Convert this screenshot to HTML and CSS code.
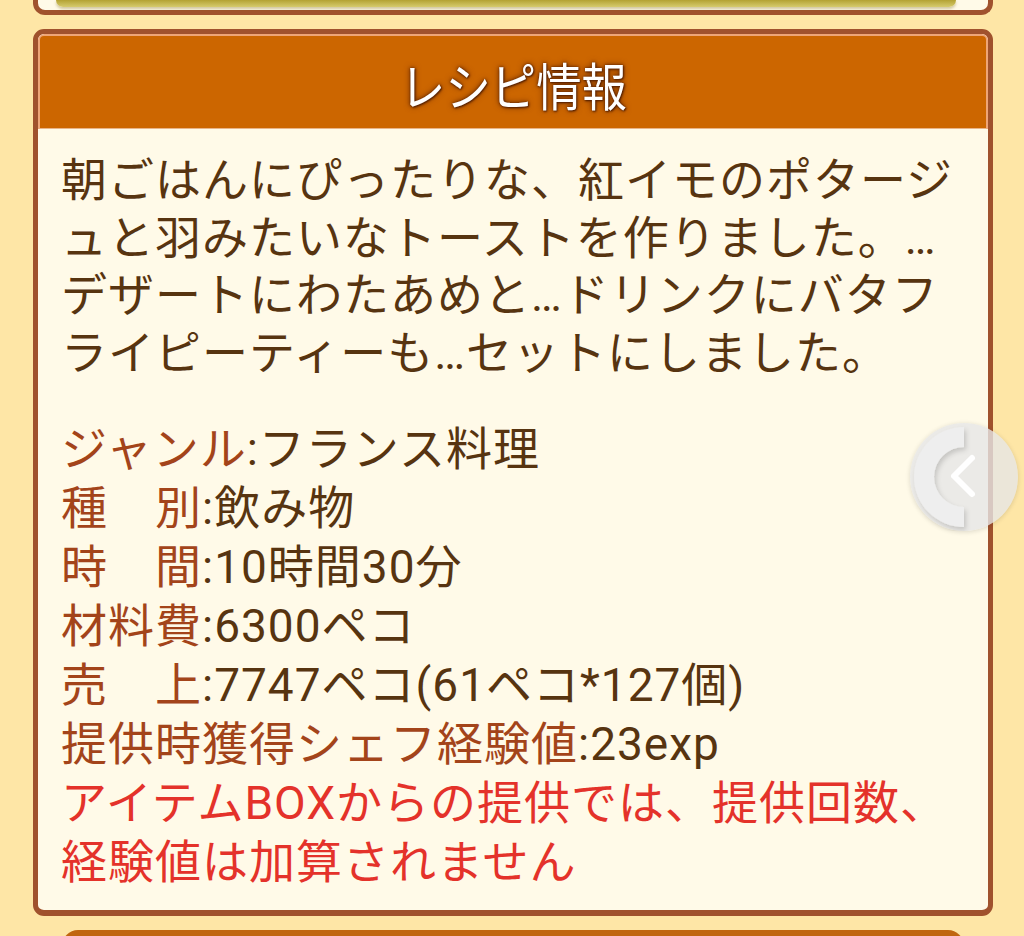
FILE: index.html
```html
<!DOCTYPE html>
<html lang="ja">
<head>
<meta charset="utf-8">
<title>レシピ情報</title>
<link rel="stylesheet" href="styles.css">
</head>
<body>
<div class="prev-card"><div class="prev-bar"></div></div>

<section class="card">
  <header class="card-head"><h2 class="card-title">レシピ情報</h2></header>
  <div class="card-body">
    <p class="desc">朝ごはんにぴったりな、紅イモのポタージ<br>ュと羽みたいなトーストを作りました。…<br>デザートにわたあめと…ドリンクにバタフ<br>ライピーティーも…セットにしました。</p>
    <ul class="info">
      <li><span class="label">ジャンル</span>:フランス料理</li>
      <li><span class="label">種　別</span>:飲み物</li>
      <li><span class="label">時　間</span>:10時間30分</li>
      <li><span class="label">材料費</span>:6300ペコ</li>
      <li><span class="label">売　上</span>:7747ペコ(61ペコ*127個)</li>
      <li><span class="label">提供時獲得シェフ経験値</span>:23exp</li>
      <li class="warn">アイテムBOXからの提供では、提供回数、<br>経験値は加算されません</li>
    </ul>
  </div>
</section>

<div class="next-card"></div>

<button class="side-btn" aria-label="戻る">
  <svg viewBox="0 0 108 108" width="108" height="108">
    <defs>
      <filter id="sh" x="-30%" y="-30%" width="160%" height="160%">
        <feDropShadow dx="2" dy="3" stdDeviation="2.5" flood-color="#000" flood-opacity="0.16"/>
      </filter>
    </defs>
    <path d="M54,4 A50,50 0 0 0 54,104 L54,84 A30,30 0 0 1 54,24 Z" fill="#eeeeee" filter="url(#sh)"/>
    <path d="M62,35 L44,53 L62,71" fill="none" stroke="#ffffff" stroke-width="6" stroke-linecap="round" stroke-linejoin="round"/>
  </svg>
</button>
</body>
</html>
```

FILE: styles.css
```css
html, body {
  margin: 0;
  padding: 0;
}
body {
  background: #fee6a6;
  width: 1024px;
  height: 936px;
  overflow: hidden;
  position: relative;
  font-family: Roboto, "Noto Sans CJK JP", sans-serif;
}

.prev-card {
  margin: 0 31px 0 33px;
  height: 10px;
  border: 5px solid #a0522d;
  border-top: none;
  border-radius: 0 0 12px 12px;
  background: #fffae8;
  display: flex;
  justify-content: center;
}
.prev-bar {
  width: 900px;
  height: 7px;
  margin-left: -14px;
  background: linear-gradient(#b3a233, #d6cb6e);
  border-radius: 0 0 14px 14px;
  box-shadow: 0 2px 3px rgba(120, 100, 20, 0.35);
}

.card {
  margin: 14px 31px 0 33px;
  border: 5px solid #a0522d;
  border-bottom-width: 6px;
  border-radius: 11px;
  background: #fffae8;
  overflow: hidden;
}
.card-head {
  background: #cc6600;
  border: 2px solid #eea577;
  border-bottom: 1px solid #e9b488;
  border-radius: 6px 6px 0 0;
  box-sizing: border-box;
  height: 95px;
  display: flex;
  align-items: center;
  justify-content: center;
}
.card-title {
  margin: 4px 0 0 2px;
  font-family: "Noto Sans CJK JP", sans-serif;
  font-weight: 400;
  font-size: 51px;
  line-height: 1;
  color: #ffffff;
  transform: scaleX(0.89);
  text-shadow: 0 0 3px #5a2200, 0 0 7px #6e2d00, 1px 1px 2px #4a1c00;
}

.card-body {
  padding: 23px 20px 18px 23px;
  font-size: 46px;
  letter-spacing: 1px;
  color: #573410;
}
.desc {
  margin: 0;
  line-height: 57.5px;
  white-space: nowrap;
}
.info {
  list-style: none;
  margin: 37.5px 0 0;
  padding: 0;
  line-height: 59px;
  white-space: nowrap;
}
.label {
  color: #a3441a;
}
.warn {
  color: #e4322a;
}

.next-card {
  margin: 14px 60px 0 62px;
  height: 40px;
  background: #c0660f;
  border-radius: 16px 16px 0 0;
}

.side-btn {
  position: absolute;
  left: 910px;
  top: 423px;
  width: 108px;
  height: 108px;
  padding: 0;
  border: none;
  border-radius: 50%;
  background: rgba(230, 230, 230, 0.8);
  box-shadow: 0 1px 5px rgba(0, 0, 0, 0.14);
  display: block;
}
.side-btn svg {
  display: block;
}
```
